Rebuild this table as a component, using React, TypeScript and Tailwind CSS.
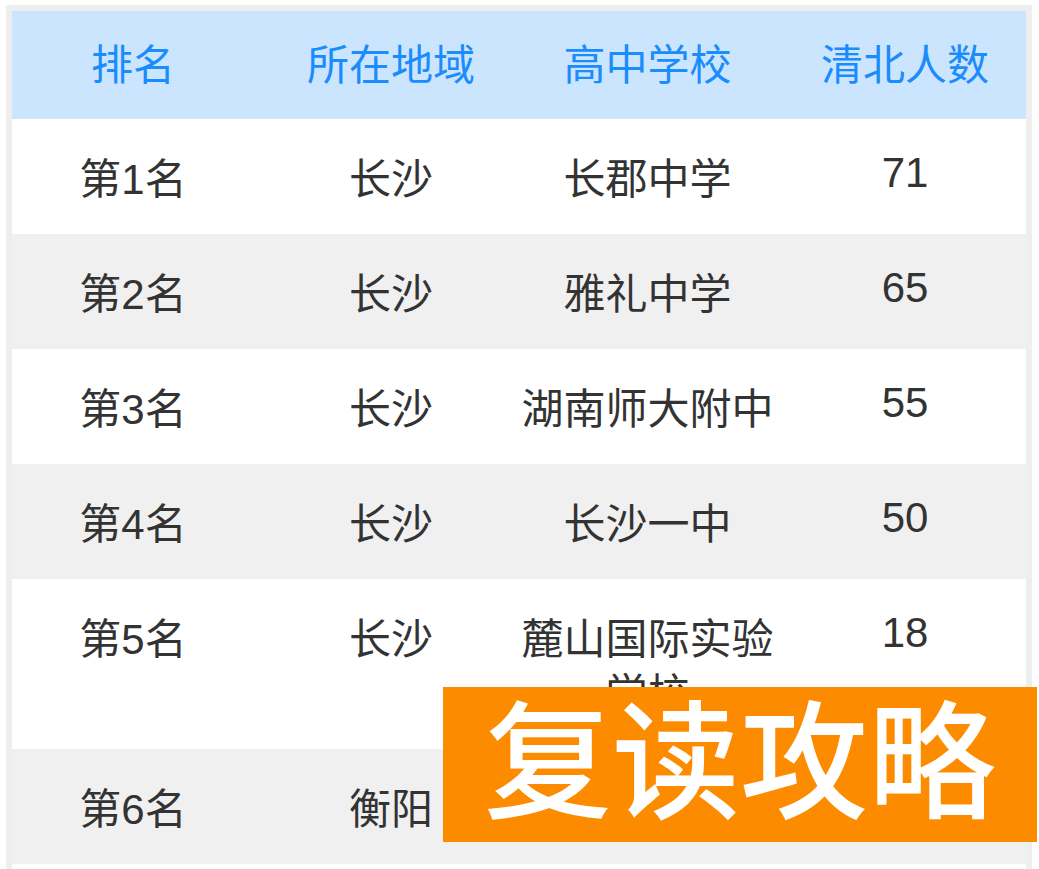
const rows = [
  { rank: "第1名", area: "长沙", school: "长郡中学", count: "71" },
  { rank: "第2名", area: "长沙", school: "雅礼中学", count: "65" },
  { rank: "第3名", area: "长沙", school: "湖南师大附中", count: "55" },
  { rank: "第4名", area: "长沙", school: "长沙一中", count: "50" },
  { rank: "第5名", area: "长沙", school: "麓山国际实验学校", count: "18" },
  { rank: "第6名", area: "衡阳", school: "衡阳市八中", count: "16" },
  { rank: "第7名", area: "株洲", school: "株洲二中", count: "12" },
];

const headers = ["排名", "所在地域", "高中学校", "清北人数"];
// per-column padding so the text sits where the original columns put it
const pads = ["pl-0 pr-[4px]", "pl-[6px] pr-0", "pl-[3px] pr-0", "pl-[10px] pr-0"];

export default function App() {
  return (
    <div
      className="relative h-[869px] w-[1039px] overflow-hidden bg-white pl-[6px] pt-[5px]"
      style={{ fontFamily: '"Liberation Sans", "Noto Sans CJK SC", sans-serif' }}
    >
      <div className="w-[1026px] bg-[#eeeeee] p-[6px]">
        <table className="w-[1014px] table-fixed border-collapse text-center text-[42px]">
          <colgroup>
            <col className="w-[246px]" />
            <col className="w-[260px]" />
            <col className="w-[256px]" />
            <col className="w-[252px]" />
          </colgroup>
          <thead>
            <tr className="h-[108px] bg-[#cce5fe] text-[#1a8cfb]">
              {headers.map((h, i) => (
                <th key={h} className={`${pads[i]} align-middle font-normal leading-[55px]`}>
                  {h}
                </th>
              ))}
            </tr>
          </thead>
          <tbody className="text-[#333333]">
            {rows.map((r, i) => (
              <tr key={r.rank} className={i % 2 === 0 ? "bg-white" : "bg-[#f0f0f0]"}>
                <td className={`${pads[0]} pt-[33px] pb-[27px] align-top leading-[55px]`}>{r.rank}</td>
                <td className={`${pads[1]} pt-[33px] pb-[27px] align-top leading-[55px]`}>{r.area}</td>
                <td className={`${pads[2]} pt-[33px] pb-[27px] align-top leading-[55px]`}>{r.school}</td>
                <td className={`${pads[3]} pt-[26px] pb-[34px] align-top leading-[55px]`}>{r.count}</td>
              </tr>
            ))}
          </tbody>
        </table>
      </div>

      <div className="absolute left-[443px] top-[687px] flex h-[155px] w-[594px] items-center justify-center bg-[#fd8b00]">
        <span className="text-[128px] font-medium leading-none text-white">复读攻略</span>
      </div>
    </div>
  );
}
